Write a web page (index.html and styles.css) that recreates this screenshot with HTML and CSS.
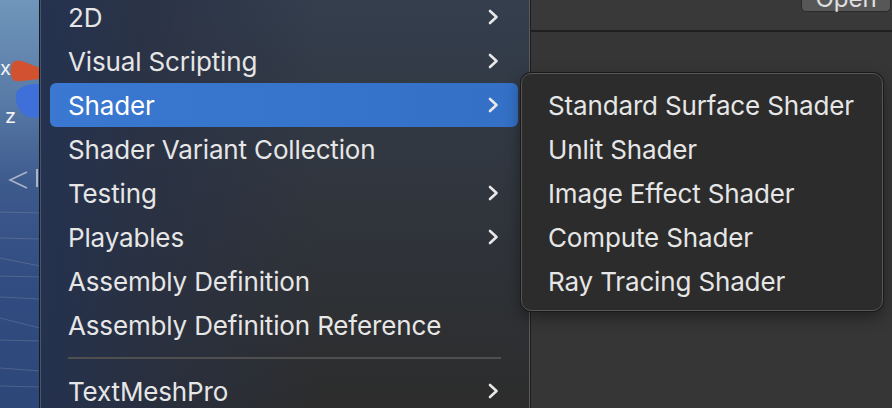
FILE: index.html
```html
<!DOCTYPE html>
<html lang="en">
<head>
    <meta charset="UTF-8">
    <title>Create Menu</title>
    <link rel="stylesheet" href="styles.css">
</head>
<body>

    <div class="screen">
        <!-- Scene view peeking out on the left -->
        <div class="scene">
            <svg width="40" height="408" viewBox="0 0 40 408">
                <g stroke="#7d8aa6" stroke-opacity="0.4" stroke-width="1">
                    <line x1="0" y1="212" x2="40" y2="213"/>
                    <line x1="0" y1="238" x2="40" y2="239"/>
                    <line x1="0" y1="258" x2="40" y2="266"/>
                    <line x1="0" y1="276" x2="40" y2="277"/>
                    <line x1="0" y1="297" x2="40" y2="299"/>
                    <line x1="0" y1="318" x2="40" y2="328"/>
                    <line x1="0" y1="340" x2="40" y2="341"/>
                    <line x1="0" y1="368" x2="40" y2="371"/>
                    <line x1="0" y1="386" x2="40" y2="387"/>
                </g>
                <text x="0" y="75" class="axis-label">x</text>
                <path d="M11 67 Q 12 59 22 61 L40 68 L40 79 L22 81 Q 11 83 11 74 Z" fill="#d2512f"/>
                <path d="M40 84 Q 24 83 17 91 Q 13 104 23 114 Q 32 120 40 117 Z" fill="#3f6fd8"/>
                <text x="5" y="123" class="axis-label">z</text>
                <path d="M27 172 L10 180 L27 188" fill="none" stroke="#a9b4c8" stroke-width="1.6"/>
                <line x1="37" y1="169" x2="37" y2="187" stroke="#a9b4c8" stroke-width="2"/>
            </svg>
        </div>

        <!-- Main context menu -->
        <div class="menu">
            <ul class="menu-list">
                <li class="item">2D
                    <svg class="chevron" width="12" height="16" viewBox="0 0 12 16"><path d="M3 2 L9.5 8 L3 14"/></svg>
                </li>
                <li class="item">Visual Scripting
                    <svg class="chevron" width="12" height="16" viewBox="0 0 12 16"><path d="M3 2 L9.5 8 L3 14"/></svg>
                </li>
                <li class="item selected">Shader
                    <svg class="chevron" width="12" height="16" viewBox="0 0 12 16"><path d="M3 2 L9.5 8 L3 14"/></svg>
                </li>
                <li class="item">Shader Variant Collection</li>
                <li class="item">Testing
                    <svg class="chevron" width="12" height="16" viewBox="0 0 12 16"><path d="M3 2 L9.5 8 L3 14"/></svg>
                </li>
                <li class="item">Playables
                    <svg class="chevron" width="12" height="16" viewBox="0 0 12 16"><path d="M3 2 L9.5 8 L3 14"/></svg>
                </li>
                <li class="item">Assembly Definition</li>
                <li class="item">Assembly Definition Reference</li>
                <li class="separator"></li>
                <li class="item">TextMeshPro
                    <svg class="chevron" width="12" height="16" viewBox="0 0 12 16"><path d="M3 2 L9.5 8 L3 14"/></svg>
                </li>
            </ul>
        </div>

        <!-- Inspector panel behind the menu -->
        <div class="panel">
            <div class="panel-top">
                <button class="open-btn">Open</button>
            </div>
        </div>

        <!-- Shader submenu -->
        <div class="submenu">
            <ul class="menu-list">
                <li class="item">Standard Surface Shader</li>
                <li class="item">Unlit Shader</li>
                <li class="item">Image Effect Shader</li>
                <li class="item">Compute Shader</li>
                <li class="item">Ray Tracing Shader</li>
            </ul>
        </div>
    </div>

</body>
</html>
```

FILE: styles.css
```css
/* Global Styles */
body {
    margin: 0;
    padding: 0;
    background-color: #383838;
    font-family: Inter, "Noto Sans", sans-serif;
    overflow: hidden;
}

.screen {
    position: relative;
    display: flex;
    width: 892px;
    height: 408px;
    overflow: hidden;
}

/* Scene View */
.scene {
    width: 39px;
    flex-shrink: 0;
    background: linear-gradient(to bottom, #7096bb 0%, #587aa6 25%, #3d5a8d 45%, #314c80 70%, #2e4779 100%);
    overflow: hidden;
}

.scene svg {
    display: block;
}

.axis-label {
    font-family: Inter, sans-serif;
    font-size: 20px;
    fill: #f2f2f2;
}

/* Main Menu */
.menu {
    width: 489px;
    flex-shrink: 0;
    border-left: 1px solid #161a22;
    border-right: 1px solid #5b5b5b;
    box-shadow: inset 1px 0 0 #4a556a;
    background:
        linear-gradient(to right, rgba(36, 50, 80, 0.95) 0px, rgba(40, 48, 68, 0.75) 110px, rgba(44, 44, 44, 0) 280px),
        linear-gradient(to bottom, #343e4d 0%, #2c2c2c 100%);
    background-color: #2c2c2c;
}

.menu-list {
    list-style: none;
    margin: -5px 0 0 0;
    padding: 0;
}

.item {
    display: flex;
    align-items: center;
    justify-content: space-between;
    height: 44px;
    margin: 0 11px 0 10px;
    padding: 0 19px 0 18px;
    border-radius: 6px;
    color: #e6e6e6;
    font-size: 26px;
    letter-spacing: -0.15px;
    white-space: nowrap;
}

.item.selected {
    background: linear-gradient(to right, #3a78d1, #3470c6);
    color: #ffffff;
}

.chevron {
    flex-shrink: 0;
}

.chevron path {
    fill: none;
    stroke: #e8e8e8;
    stroke-width: 2.6;
    stroke-linecap: round;
    stroke-linejoin: round;
}

.separator {
    height: 2px;
    margin: 10px 28px 10px 28px;
    background-color: #4f4f50;
}

/* Inspector Panel */
.panel {
    flex: 1;
    border-left: 1px solid #1d1d1d;
    background-color: #363636;
}

.panel-top {
    display: flex;
    justify-content: flex-end;
    height: 30px;
    padding-right: 1px;
    border-bottom: 2px solid #1f1f1f;
    background-color: #393939;
}

.open-btn {
    width: 90px;
    height: 26px;
    margin-top: -14px;
    border: 1px solid #2a2a2a;
    border-radius: 5px;
    background-color: #575757;
    color: #e0e0e0;
    font-family: Inter, sans-serif;
    font-size: 24px;
    line-height: 24px;
    padding: 0;
}

/* Submenu */
.submenu {
    position: absolute;
    left: 521px;
    top: 73px;
    width: 360px;
    height: 236px;
    border: 1px solid #565656;
    border-radius: 10px;
    background-color: #2c2c2c;
    box-shadow: 0 0 0 1px #1a1a1a, 0 6px 16px rgba(0, 0, 0, 0.4);
}

.submenu .menu-list {
    margin: 0;
    padding-top: 9px;
}

.submenu .item {
    margin: 0 8px;
    padding-left: 18px;
}
```
